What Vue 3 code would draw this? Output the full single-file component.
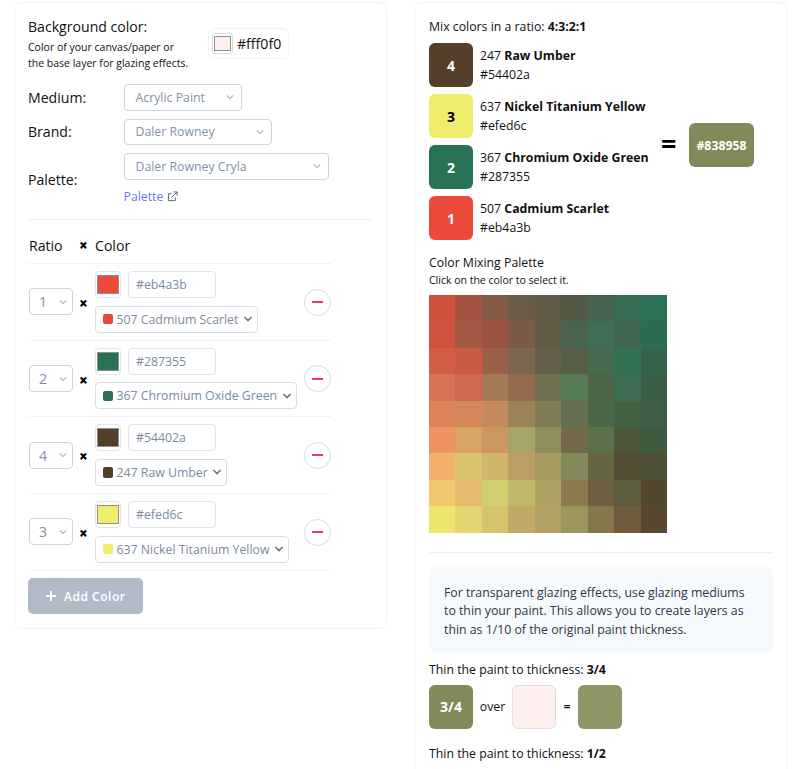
<script setup>
const rows = [
  { ratio: 1, hex: '#eb4a3b', name: '507 Cadmium Scarlet', width: 163 },
  { ratio: 2, hex: '#287355', name: '367 Chromium Oxide Green', width: 202 },
  { ratio: 4, hex: '#54402a', name: '247 Raw Umber', width: 132 },
  { ratio: 3, hex: '#efed6c', name: '637 Nickel Titanium Yellow', width: 194 },
]
const mix = [
  { n: 4, code: '247', name: 'Raw Umber', hex: '#54402a' },
  { n: 3, code: '637', name: 'Nickel Titanium Yellow', hex: '#efed6c', dark: true },
  { n: 2, code: '367', name: 'Chromium Oxide Green', hex: '#287355' },
  { n: 1, code: '507', name: 'Cadmium Scarlet', hex: '#eb4a3b' },
]
const grid = [
  '#cf523c','#a55341','#835b45','#6b5b49','#5f5b47','#555a47','#476350','#366b54','#2c7055',
  '#cf533e','#a55a45','#9b5440','#7d5a45','#625c47','#49634d','#3f6f56','#3f6750','#2c6c52',
  '#d35c45','#c95a43','#9b6148','#7b674d','#635f4a','#575e48','#476b50','#337250','#33654c',
  '#d97355','#cf6a50','#a47b57','#946a4f','#717152','#567b57','#4e6449','#3f6d52','#3a5f44',
  '#dc8458','#d5875a','#c58a5b','#9b8259','#817e57','#646f51','#4b6649','#456145','#3f5e43',
  '#ee9362','#d8a465','#cc965f','#a6a567','#8f8e5e','#736a4a','#5b714c','#4d553b','#3f5a3e',
  '#f2b06a','#dbc46e','#d2b56d','#bc9e64','#a69c60','#83895a','#666642','#554e35','#4b5037',
  '#f2c86e','#e5bc6e','#d0d06e','#bfb96a','#aca062','#8d7a4e','#715f41','#5d5c3d','#51482f',
  '#ece76c','#e3d56f','#d6c56d','#c1aa66','#b0a163','#9a965e','#83774b','#6e5c3d','#584630',
]
</script>

<template>
  <div class="page">
    <section class="card left">
      <div class="bg-row">
        <div class="bg-text">
          <div class="bg-title">Background color:</div>
          <div class="bg-sub">Color of your canvas/paper or<br>the base layer for glazing effects.</div>
        </div>
        <div class="bg-btn">
          <span class="bg-swatch"><i></i></span>
          <span>#fff0f0</span>
        </div>
      </div>

      <div class="field first">
        <label>Medium:</label>
        <div class="sel w118"><span>Acrylic Paint</span><svg viewBox="0 0 20 20"><path d="M6 8l4 4 4-4"/></svg></div>
      </div>
      <div class="field">
        <label>Brand:</label>
        <div class="sel w148"><span>Daler Rowney</span><svg viewBox="0 0 20 20"><path d="M6 8l4 4 4-4"/></svg></div>
      </div>
      <div class="field palette">
        <label>Palette:</label>
        <div class="palette-col">
          <div class="sel w205"><span>Daler Rowney Cryla</span><svg viewBox="0 0 20 20"><path d="M6 8l4 4 4-4"/></svg></div>
          <a class="link">Palette
            <svg viewBox="0 0 12 12" class="ext"><path d="M9 7v3.500H1.500V3H5M7 1h4v4M11 1L5.500 6.500"/></svg>
          </a>
        </div>
      </div>

      <hr class="rule">

      <div class="head"><span class="h-ratio">Ratio</span><b class="times">×</b><span>Color</span></div>

      <div class="rows">
        <div v-for="r in rows" :key="r.hex" class="row">
          <div class="sel ratio"><span>{{ r.ratio }}</span><svg viewBox="0 0 20 20"><path d="M6 8l4 4 4-4"/></svg></div>
          <b class="times">×</b>
          <div class="pick">
            <div class="pick-top">
              <span class="sw-btn"><i :style="{ background: r.hex }"></i></span>
              <input class="hex" :value="r.hex" readonly>
            </div>
            <div class="dd" :style="{ width: r.width + 'px' }">
              <i class="dot" :style="{ background: r.hex }"></i>
              <span class="dd-name">{{ r.name }}</span>
              <svg viewBox="0 0 20 20"><path d="M5.500 7.500l4.500 4.500 4.500-4.500"/></svg>
            </div>
          </div>
          <button class="minus"><i></i></button>
        </div>
      </div>

      <button class="add"><svg viewBox="0 0 12 12"><path d="M6 1v10M1 6h10"/></svg>Add Color</button>
    </section>

    <section class="card right">
      <div class="t14">Mix colors in a ratio: <b>4:3:2:1</b></div>
      <div class="mix">
        <div class="mix-list">
          <div v-for="m in mix" :key="m.hex" class="mix-row">
            <div class="box" :class="{ dark: m.dark }" :style="{ background: m.hex }">{{ m.n }}</div>
            <div class="mix-text">
              <div>{{ m.code }} <b>{{ m.name }}</b></div>
              <div>{{ m.hex }}</div>
            </div>
          </div>
        </div>
        <div class="eq">=</div>
        <div class="result">#838958</div>
      </div>

      <div class="t14 cmp">Color Mixing Palette</div>
      <div class="small">Click on the color to select it.</div>
      <div class="grid">
        <i v-for="(c, i) in grid" :key="i" :style="{ background: c }"></i>
      </div>

      <hr class="rule r2">

      <div class="tip">For transparent glazing effects, use glazing mediums to thin your paint. This allows you to create layers as thin as 1/10 of the original paint thickness.</div>

      <div class="t14 thin">Thin the paint to thickness: <b>3/4</b></div>
      <div class="glaze">
        <div class="box g1">3/4</div>
        <span class="over">over</span>
        <div class="box g2"></div>
        <span class="geq">=</span>
        <div class="box g3"></div>
      </div>
      <div class="t14 thin2">Thin the paint to thickness: <b>1/2</b></div>
    </section>
  </div>
</template>

<style>
html, body { margin: 0; background: #fff; overflow: hidden; }
</style>

<style scoped>
.page {
  display: flex;
  align-items: flex-start;
  gap: 27px;
  height: 769px;
  overflow: hidden;
  padding: 2px 13px 0 13.5px;
  box-sizing: border-box;
  font-family: "Open Sans", sans-serif;
  color: #111;
}
.card {
  width: 373.500px;
  flex: none;
  box-sizing: border-box;
  border: 1px solid #f1f3f5;
  border-radius: 8px;
  background: #fff;
}
.left { padding: 14px 13.500px; height: 627px; }
.right { padding: 15px 14px 0 14px; height: 900px; }
.bg-row { display: flex; align-items: flex-start; }
.bg-text { width: 180px; }
.bg-title { font-size: 14.100px; line-height: 20px; }
.bg-sub { font-size: 10.500px; line-height: 16px; margin-top: 2px; white-space: nowrap; }
.bg-btn {
  margin-top: 11px;
  width: 81px;
  height: 30.500px;
  box-sizing: border-box;
  border: 1px solid #f1f3f5;
  border-radius: 6px;
  display: flex;
  align-items: center;
  gap: 4px;
  padding-left: 3px;
  font-size: 14.100px;
}
.bg-swatch {
  width: 21px; height: 21px; box-sizing: border-box;
  border: 1px solid #dcdcdc; border-radius: 3px; padding: 2px 1px; display: block;
}
.bg-swatch i { display: block; height: 100%; background: #fff0f0; border: 1px solid #8f8f8f; box-sizing: border-box; }
.field { display: flex; align-items: center; margin-top: 8px; }
.field.first { margin-top: 13px; }
.field label { width: 95.500px; font-size: 14.100px; }
.palette-col { display: flex; flex-direction: column; }
.sel {
  height: 26.500px;
  box-sizing: border-box;
  border: 1px solid #cbd5e0;
  border-radius: 4px;
  background: #fff;
  display: flex;
  align-items: center;
  justify-content: space-between;
  padding: 0 3px 0 11px;
  font-size: 12.300px;
  color: #8293a9;
}
.sel svg { width: 16px; height: 16px; fill: none; stroke: #a0aec0; stroke-width: 1.300; }
.w118 { width: 118px; }
.w148 { width: 148px; }
.w205 { width: 205px; }
.link {
  margin-top: 8px;
  font-size: 12.300px;
  line-height: 18px;
  color: #667eea;
  display: flex;
  align-items: center;
  gap: 4px;
}
.ext { width: 11px; height: 11px; fill: none; stroke: #4a5568; stroke-width: 1; }
.rule { border: 0; border-top: 1px solid #edf0f3; margin: 13.500px 0 0; }
.head {
  display: flex;
  align-items: center;
  margin: 15.500px 0 0 1px;
  font-size: 14.100px;
  line-height: 20px;
}
.h-ratio { width: 50px; }
.times { font-size: 15px; font-weight: 800; line-height: 1; color: #000; }
.head .times { width: 16px; }
.rows { width: 303px; margin-top: 7.500px; border-top: 1px dotted #e6e9ee; }
.row {
  height: 75.700px;
  border-bottom: 1px dotted #e6e9ee;
  display: flex;
  align-items: center;
  position: relative;
}
.ratio {
  width: 44px;
  height: 27px;
  margin: 0 6px 0 1px;
  padding-left: 9px;
  padding-right: 1px;
  font-size: 14.100px;
  flex: none;
}
.row .times { margin-top: 3px; width: 16px; flex: none; }
.pick { display: flex; flex-direction: column; gap: 7.500px; flex: none; }
.pick-top { display: flex; gap: 7px; }
.sw-btn {
  width: 26px; height: 27px; box-sizing: border-box;
  border: 1px solid #e2e6ea; border-radius: 4px; padding: 3px 1px; display: block;
}
.sw-btn i { display: block; height: 100%; border: 1px solid #8f8f8f; box-sizing: border-box; }
.hex {
  width: 88px; height: 27px; box-sizing: border-box;
  border: 1px solid #dfe4ea; border-radius: 4px; padding: 0 7px;
  font: 12.300px "Open Sans", sans-serif; color: #7b8ba0; outline: none;
}
.dd {
  height: 27px; box-sizing: border-box;
  border: 1px solid #d8dee6; border-radius: 4px;
  display: flex; align-items: center;
  padding: 0 1px 0 6.500px;
  font-size: 12.300px; color: #7b8ba0; white-space: nowrap;
}
.dot { width: 10.500px; height: 10.500px; border-radius: 2px; flex: none; margin-right: 3.500px; }
.dd-name { flex: 1; }
.dd svg { width: 16px; height: 16px; fill: none; stroke: #64748b; stroke-width: 2; flex: none; }
.minus {
  position: absolute;
  left: 275.500px;
  top: 24.500px;
  width: 27px; height: 27px; box-sizing: border-box;
  border: 1px solid #d5dae1; border-radius: 50%; background: #fff; padding: 0;
  display: flex; align-items: center; justify-content: center;
}
.minus i { width: 11px; height: 2px; background: #f5365c; display: block; }
.add {
  margin-top: 7.500px;
  width: 114.500px; height: 36px;
  border: 0; border-radius: 5px;
  background: #b2bac8; color: #fff;
  font: 600 12px "Open Sans", sans-serif; letter-spacing: 0.500px;
  display: flex; align-items: center; justify-content: center; gap: 7px;
  padding: 0;
}
.add svg { width: 12px; height: 12px; fill: none; stroke: #fff; stroke-width: 2; }
.t14 { font-size: 12.300px; line-height: 18px; }
.t14 b, .mix-text b { font-weight: 700; }
.mix { display: flex; align-items: center; margin-top: 7px; }
.mix-list { display: flex; flex-direction: column; gap: 7.100px; width: 229px; flex: none; }
.mix-row { display: flex; align-items: center; gap: 7px; height: 44px; }
.box {
  width: 44px; height: 44px; border-radius: 6px; flex: none;
  display: flex; align-items: center; justify-content: center;
  color: #fff; font-weight: 700; font-size: 14px;
  box-sizing: border-box;
}
.box.dark { color: #000; }
.mix-text { font-size: 12.300px; line-height: 19px; white-space: nowrap; }
.eq { font-size: 27px; font-weight: 700; width: 28px; line-height: 1; color: #000; margin: 3px 0 0 3px; }
.result {
  width: 65px; height: 44px; border-radius: 6px; background: #838958;
  color: #fff; font-weight: 700; font-size: 12.300px; margin-top: 7px;
  display: flex; align-items: center; justify-content: center;
}
.cmp { margin-top: 14px; }
.small { font-size: 10.500px; line-height: 15px; margin-top: 0.500px; }
.grid {
  margin-top: 7px;
  width: 238px; height: 238px;
  display: grid;
  grid-template-columns: repeat(9, 1fr);
  grid-template-rows: repeat(9, 1fr);
}
.grid i { display: block; }
.r2 { margin-top: 19px; }
.tip {
  margin-top: 14px;
  background: #f7fafc;
  border-radius: 6px;
  padding: 17px 15px 0;
  height: 85px;
  box-sizing: border-box;
  font-size: 12.300px;
  line-height: 18.600px;
  color: #2d3748;
}
.thin { margin-top: 9px; }
.glaze { display: flex; align-items: center; margin-top: 6px; }
.g1 { background: #838958; }
.over { width: 39px; text-align: center; font-size: 12.300px; }
.g2 { background: #fff0f0; border: 1px solid #e6dcdc; }
.geq { width: 22px; text-align: center; font-size: 12.300px; font-weight: 600; }
.g3 { background: #8f9666; }
.thin2 { margin-top: 16px; }
</style>
